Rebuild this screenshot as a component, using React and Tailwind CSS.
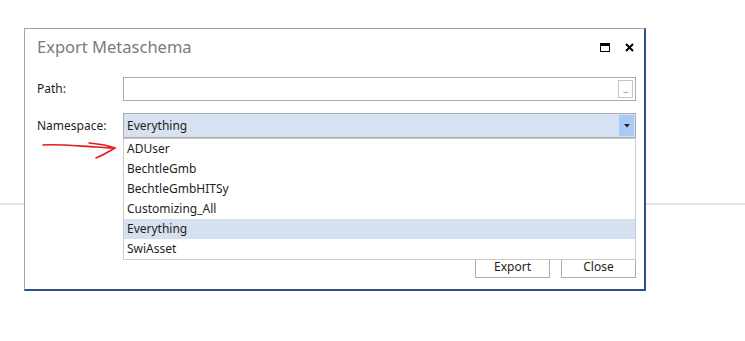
const FONT = { fontFamily: '"Noto Sans", "Open Sans", sans-serif' }

const ITEMS = ['ADUser', 'BechtleGmb', 'BechtleGmbHITSy', 'Customizing_All', 'Everything', 'SwiAsset']

function RedArrow() {
  return (
    <svg className="absolute left-[38px] top-[139px]" width="86" height="24" viewBox="0 0 86 24" fill="none">
      <path d="M5 6 C 20 5, 40 7, 58 8 S 72 9, 77 9" stroke="#e51a1a" strokeWidth="1.6" strokeLinecap="round" />
      <path d="M51 4 C 62 5, 72 7, 77 9 C 72 12, 65 16, 58 19" stroke="#e51a1a" strokeWidth="1.6" strokeLinecap="round" strokeLinejoin="round" />
    </svg>
  )
}

export default function App() {
  return (
    <div className="relative w-[745px] h-[341px] bg-white overflow-hidden" style={FONT}>
      {/* page behind the dialog */}
      <div className="mt-[203px] h-[2px] bg-[#e4e4e4]" />

      {/* dialog window */}
      <div className="absolute left-[24px] top-[28px] w-[622px] h-[263px] bg-white border-l border-t border-[#a3a3a3] border-r-2 border-b-2 border-r-[#2c4f8e] border-b-[#2c4f8e] flex flex-col pl-[12px] pr-[8px]">
        <div className="flex items-center justify-between h-[24px] mt-[6px]">
          <span className="text-[16.5px] text-[#7b7b7b] leading-none">Export Metaschema</span>
          <div className="flex items-center gap-[15px] pr-[2px]">
            <div className="w-[10px] h-[9px] border border-black border-t-[3px]" />
            <svg width="9" height="9" viewBox="0 0 9 9">
              <path d="M1 1 L8 8 M8 1 L1 8" stroke="#000" strokeWidth="2" />
            </svg>
          </div>
        </div>

        <div className="flex items-center mt-[18px] h-[24px]">
          <span className="w-[86px] text-[12px] text-[#1e1e1e]">Path:</span>
          <div className="flex-1 h-[24px] border border-[#ababab] bg-white flex items-center justify-end pr-[2px]">
            <div className="w-[15px] h-[18px] border border-[#c6c6c6] bg-white flex items-end justify-center pb-[3px]">
              <span className="text-[8px] leading-none text-[#555] tracking-[-0.5px]">...</span>
            </div>
          </div>
        </div>

        <div className="flex items-center mt-[12px] h-[25px]">
          <span className="w-[86px] text-[12px] text-[#1e1e1e]">Namespace:</span>
          <div className="flex-1 h-[25px] border border-[#acacac] bg-[#d6e1f2] flex items-center pl-[3px] pr-[1px]">
            <span className="flex-1 text-[12px] text-[#1e1e1e]">Everything</span>
            <div className="w-[15px] h-[21px] bg-[#a9c9f6] flex items-center justify-center">
              <svg width="6" height="4" viewBox="0 0 6 4">
                <path d="M0 0 H6 L3 3.5 Z" fill="#222" />
              </svg>
            </div>
          </div>
        </div>

        <div className="flex-1" />

        <div className="flex justify-end gap-[11px] mb-[11px]">
          <button className="w-[75px] h-[23px] border border-[#adadad] bg-white text-[12px] text-[#1e1e1e]">Export</button>
          <button className="w-[75px] h-[23px] border border-[#adadad] bg-white text-[12px] text-[#1e1e1e]">Close</button>
        </div>
      </div>

      {/* open dropdown list */}
      <div className="absolute left-[123px] top-[138px] w-[513px] border border-[#c9c9c9] bg-white">
        {ITEMS.map((item) => (
          <div
            key={item}
            className={`h-[20px] flex items-center pl-[3px] text-[12px] text-[#1e1e1e] ${item === 'Everything' ? 'bg-[#d5e0f1]' : ''}`}
          >
            {item}
          </div>
        ))}
      </div>

      <RedArrow />
    </div>
  )
}
